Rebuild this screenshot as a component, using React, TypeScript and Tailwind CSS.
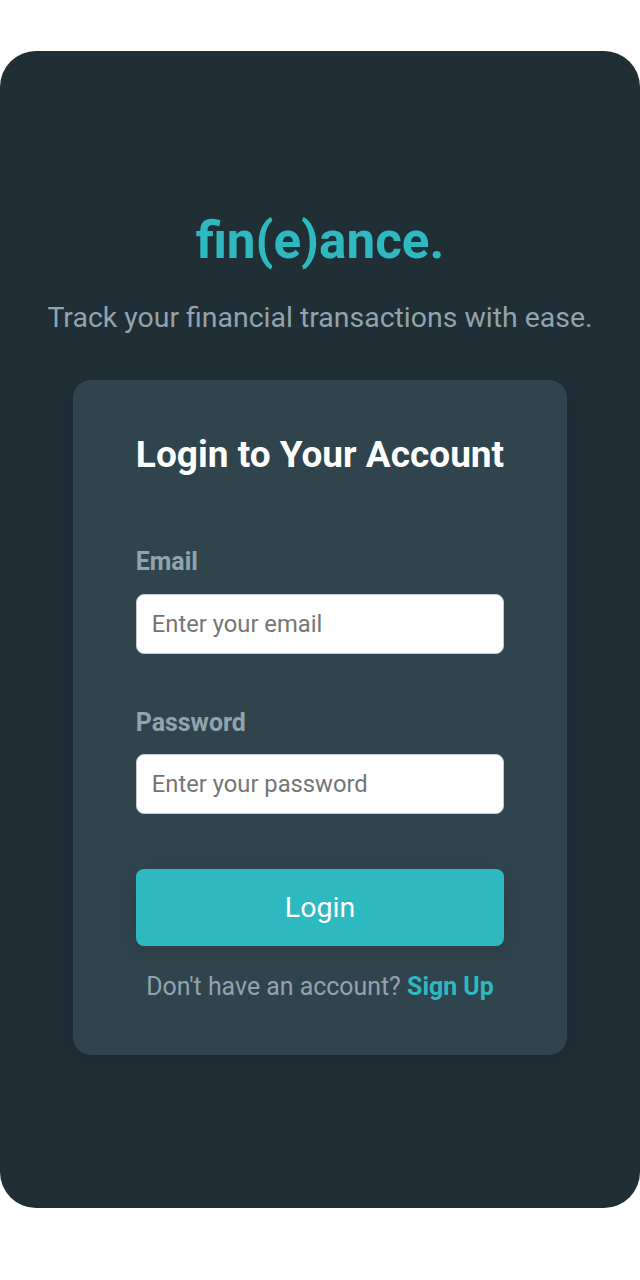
import React from "react";

function Field({ label, placeholder, type, className }: { label: string; placeholder: string; type: string; className: string }) {
  return (
    <label className={`flex flex-col ${className}`}>
      <span className="h-8 text-[24.9px] leading-8 font-bold text-[#90a4ae]">{label}</span>
      <input
        type={type}
        placeholder={placeholder}
        className="mt-[15.6px] h-[60px] w-full rounded-[8px] border-[1.5px] border-[#c5cace] bg-white px-[15px] text-[23.75px] text-gray-800 outline-none placeholder:text-[#757575]"
      />
    </label>
  );
}

export default function App() {
  return (
    <div className="h-[1280px] w-[640px] overflow-hidden bg-white pt-[51px] font-['Roboto',sans-serif]">
      <main className="flex h-[1157px] flex-col items-center rounded-[36px] bg-[#202e35] pt-[159px]">
        <h1 className="h-[62px] text-[51.2px] leading-[62px] font-bold whitespace-nowrap text-[#2eb8bf]">fin(e)ance.</h1>
        <p className="mt-[28px] h-9 text-[28.45px] leading-9 whitespace-nowrap text-[#90a4ae]">
          Track your financial transactions with ease.
        </p>
        <form className="mt-[44px] flex h-[675px] w-[493.4px] flex-col rounded-[18px] bg-[#30444d] px-[62.5px] pt-[52px] shadow-[0_4px_16px_rgba(0,0,0,0.1)]">
          <h2 className="h-[46px] text-center text-[37px] leading-[46px] font-bold whitespace-nowrap text-white">Login to Your Account</h2>
          <Field className="mt-[68.4px]" label="Email" placeholder="Enter your email" type="email" />
          <Field className="mt-[52.8px]" label="Password" placeholder="Enter your password" type="password" />
          <button type="button" className="mt-[54.6px] h-[77px] shrink-0 rounded-[8px] bg-[#2eb8bf] pt-[2px] text-[28.5px] text-white shadow-[0_4px_16px_rgba(0,0,0,0.1)]">
            Login
          </button>
          <p className="mt-[25px] text-center text-[24.9px] leading-8 whitespace-nowrap text-[#90a4ae]">
            Don't have an account? <a href="#" className="font-bold text-[#2eb8bf]">Sign Up</a>
          </p>
        </form>
      </main>
    </div>
  );
}
